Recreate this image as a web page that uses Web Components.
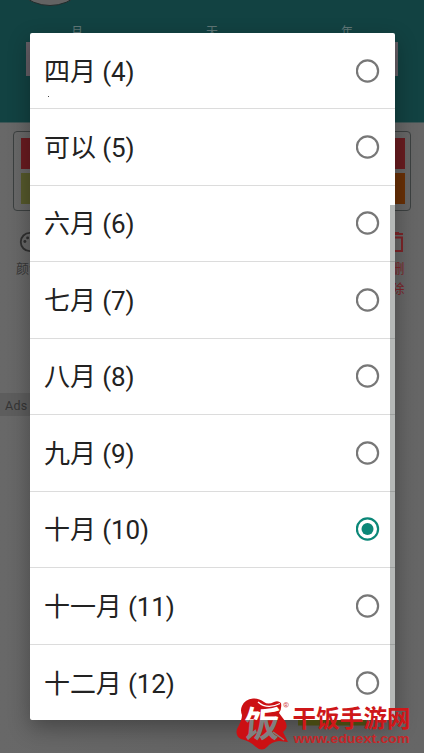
<!DOCTYPE html>
<html lang="zh-CN">
<head>
<meta charset="utf-8">
<title>月份选择</title>
<style>
html,body{margin:0;height:100%;overflow:hidden}
body{font-family:Roboto,"Noto Sans CJK SC",sans-serif;background:#666}
</style>
</head>
<body>
<month-screen></month-screen>
<script>
const define = (name, html, setup) => customElements.define(name, class extends HTMLElement {
  constructor() {
    super();
    this.attachShadow({ mode: 'open' }).innerHTML = html;
  }
  connectedCallback() { if (setup) setup(this, this.shadowRoot); }
});

define('page-header', `
<style>
:host{display:flex;flex-direction:column;box-sizing:border-box;height:123px;background:#124242;border-bottom:1px solid #3f5656;padding:0 26px;overflow:hidden}
.avatar{width:86px;height:86px;box-sizing:border-box;border:1px solid #222c2c;border-radius:50%;background:#636363;margin:-80px 0 0 -19px;flex:none}
.labels{display:grid;grid-template-columns:repeat(3,1fr);gap:11px;margin:18px 0 0 -11px;text-align:center;font-size:12px;line-height:17px;color:#5f7676;width:394px}
.fields{height:34px;background:#655f66;margin-top:1px}
</style>
<div class="avatar"></div>
<div class="labels"><span>月</span><span>天</span><span>年</span></div>
<div class="fields"></div>`);

define('color-panel', `
<style>
:host{display:grid;grid-template-columns:1fr 1fr;grid-template-rows:31px 31px;gap:4px 0;box-sizing:border-box;width:398px;height:80px;border:1px solid #3c4040;border-radius:4px;margin:8px 0 0 13px;padding:6px 5px 0 7px}
</style>
<i style="background:#691b20"></i><i style="background:#691c20"></i>
<i style="background:#55582b"></i><i style="background:#693006"></i>`);

define('tool-button', `
<style>
:host{display:flex;flex-direction:column;align-items:center;width:30px;font-size:13px;line-height:20px;color:#383838;text-align:center}
::slotted(svg){display:block;width:22px;height:22px;margin-bottom:6px}
</style>
<slot name="icon"></slot><slot></slot>`);

define('radio-mark', `
<style>
:host{display:block;width:24px;height:24px;flex:none;color:#777}
:host([checked]){color:#0b8778}
svg{display:block}
.dot{display:none}
:host([checked]) .dot{display:block}
</style>
<svg width="24" height="24" viewBox="0 0 24 24"><circle cx="11.5" cy="12" r="10.6" fill="none" stroke="currentColor" stroke-width="2.2"/><circle class="dot" cx="11.5" cy="12" r="6" fill="currentColor"/></svg>`);

define('month-option', `
<style>
:host{display:flex;align-items:center;justify-content:space-between;box-sizing:border-box;height:76.5px;padding:0 15px 0 14.5px;border-bottom:1px solid #dcdcdc;font-size:26px;line-height:38px;color:#222}
:host(:first-child){height:76px}
:host(:last-child){border-bottom:0}
span{white-space:pre;padding-top:2px;letter-spacing:-.1px}
</style>
<span><slot></slot></span><radio-mark></radio-mark>`,
(el, root) => { if (el.hasAttribute('selected')) root.querySelector('radio-mark').setAttribute('checked', ''); });

define('month-dialog', `
<style>
:host{display:block;position:absolute;left:29.5px;top:33px;width:365px;height:687px;background:#fff;border-radius:2px;box-shadow:0 8px 22px rgba(0,0,0,.32)}
.list{height:687px;overflow:hidden}
.bar{position:absolute;right:0;top:172px;width:5px;bottom:0;background:rgba(0,12,8,.29)}
.speck{position:absolute;left:18.5px;top:63px;width:1px;height:1px;background:#444}
</style>
<div class="list"><slot></slot></div><div class="bar"></div><i class="speck"></i>`);

define('site-mark', `
<style>
:host{display:block;position:absolute;left:232px;top:694px;width:184px;height:59px}
svg{display:block;font-family:"Noto Sans CJK SC",sans-serif}
</style>
<svg width="184" height="59" viewBox="232 694 184 59">
<defs><linearGradient id="cut" gradientUnits="userSpaceOnUse" x1="0" y1="719.5" x2="0" y2="720.5"><stop offset="0" stop-color="#fff"/><stop offset="1" stop-color="#777"/></linearGradient>
<linearGradient id="glyph" gradientUnits="userSpaceOnUse" x1="0" y1="-17.5" x2="0" y2="-16.5"><stop offset="0" stop-color="#fff"/><stop offset="1" stop-color="#808080"/></linearGradient></defs>
<rect x="298" y="720" width="68" height="5.5" fill="#454711"/>
<path fill="#cc1013" d="M242 706Q245 699 253 698.5Q259 698 264 702Q268 705 274 702Q278 700 281 703Q282 709 279 713L285 721Q289 727 283 732L288 742L279 741Q271 742 267 747Q262 752 256 747Q250 741 241 739Q235 736 237 729Q242 720 242 715Q240 710 242 706Z"/>
<path fill="none" stroke="url(#cut)" stroke-width="1.3" d="M258 702Q267 710 280 703.5"/>
<text transform="translate(243 737) skewX(-5)" font-size="36" font-weight="700" textLength="36" lengthAdjust="spacingAndGlyphs" fill="url(#glyph)">饭</text>
<path fill="none" stroke="#808080" stroke-width="1.4" d="M273 732L284 740"/>
<circle cx="286" cy="704.8" r="2.4" fill="none" stroke="#d77" stroke-width=".7"/>
<text x="284.6" y="706.6" font-size="4.5" fill="#cf3b3c" font-family="Roboto">R</text>
<text x="292.5" y="727.3" font-size="23.5" font-weight="700" textLength="118" fill="#ce1719" font-family="Liberation Sans,Noto Sans CJK SC,sans-serif">干饭手游网</text>
<text x="293.5" y="743" font-size="13.5" font-weight="700" textLength="116" lengthAdjust="spacingAndGlyphs" fill="#c62628" font-family="Liberation Sans,sans-serif">www.eduext.com</text>
</svg>`);

define('month-screen', `
<style>
:host{display:block;position:relative;width:424px;height:753px;overflow:hidden;background:linear-gradient(90deg,#686868,#646464 50%,#666)}
.tools{display:flex;justify-content:space-between;margin:20px 11px 0 14px;height:130px}
.red{color:#7c2529}
.ads{box-sizing:border-box;width:424px;height:23px;margin-top:32px;padding-left:5px;font-size:12.5px;line-height:26px;letter-spacing:.3px;color:#353535;background:linear-gradient(90deg,#5d5d5d 30px,transparent 30px)}
</style>
<page-header></page-header>
<color-panel></color-panel>
<div class="tools">
<tool-button>颜色<svg slot="icon" viewBox="0 0 24 24"><path fill="none" stroke="#303030" stroke-width="2" d="M13 2a10 10 0 0 0 0 20c2 0 3-2 2-4s1-3 3-3h2c2 0 3-2 3-4 0-5-5-9-10-9z"/><g fill="#303030"><circle cx="7.5" cy="11.5" r="1.6"/><circle cx="10.5" cy="7.5" r="1.6"/><circle cx="15.5" cy="7.5" r="1.6"/></g></svg></tool-button>
<tool-button class="red"><span>删<br>除</span><svg slot="icon" viewBox="0 0 22 22"><path fill="none" stroke="#7c2529" stroke-width="2" d="M0 3H16M1 6.5H15V20H1ZM4 2H12"/></svg></tool-button>
</div>
<div class="ads">Ads</div>
<month-dialog>
<month-option>四月 (4)</month-option>
<month-option>可以 (5)</month-option>
<month-option>六月 (6)</month-option>
<month-option>七月 (7)</month-option>
<month-option>八月 (8)</month-option>
<month-option>九月 (9)</month-option>
<month-option selected>十月 (10)</month-option>
<month-option>十一月 (11)</month-option>
<month-option>十二月 (12)</month-option>
</month-dialog>
<site-mark></site-mark>`);
</script>
</body>
</html>
